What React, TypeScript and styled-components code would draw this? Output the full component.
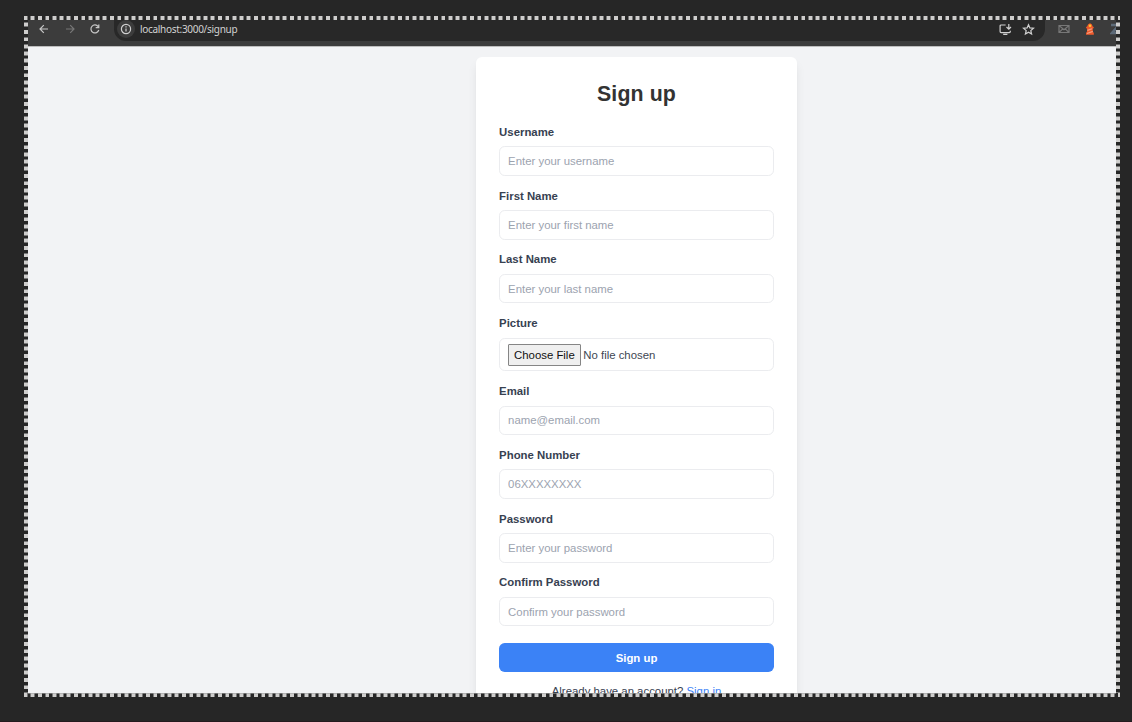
import React from 'react';
import styled, { createGlobalStyle } from 'styled-components';

const GlobalStyle = createGlobalStyle`
  * { box-sizing: border-box; }
  html, body { margin: 0; height: 100%; overflow: hidden; background: #262626; }
  body { font-family: "Liberation Sans", Arial, sans-serif; }
`;

const Desktop = styled.div`
  width: 1132px;
  height: 722px;
  padding: 16px 12px 25px 24px;
  background: #262626;
  border-bottom: 1px solid #241a1e;
`;

const dots = (direction: string) =>
  `repeating-linear-gradient(${direction}, #cecdcc 0 3.2px, #777 3.2px 3.8px, #262626 3.8px 6.4px, #777 6.4px 7.2px)`;

const Selection = styled.div`
  width: 1096px;
  height: 681px;
  padding: 4px;
  background-color: #262626;
  background-image: ${dots('to right')}, ${dots('to right')}, ${dots('to bottom')}, ${dots('to bottom')};
  background-size: 100% 4px, 100% 4px, 4px 100%, 4px 100%;
  background-position: 0 0, 0 100%, 0 0, 100% 0;
  background-repeat: no-repeat;
`;

const Browser = styled.div`
  display: flex;
  flex-direction: column;
  width: 1088px;
  height: 673px;
  overflow: hidden;
  background: #f2f3f5;
  box-shadow: 0 1px 0 #a0a0a099;
`;

const Toolbar = styled.header`
  display: flex;
  flex: none;
  height: 27px;
  background: #3c3c3c;
  border-bottom: 1px solid #bdbdbd;
  overflow: hidden;
`;

const Navigation = styled.nav`
  display: flex;
  flex: none;
  width: 86px;
  height: 18px;
  padding-left: 10px;
  align-items: center;
  gap: 13.6px;
`;

const Icon = styled.svg<{ $size?: number }>`
  display: block;
  flex: none;
  width: ${p => p.$size ?? 12}px;
  height: ${p => p.$size ?? 12}px;
  fill: none;
  stroke: currentColor;
  stroke-width: 1.2;
`;

const AddressBar = styled.div`
  display: flex;
  flex: none;
  align-items: center;
  width: 931px;
  height: 23px;
  margin-top: -2px;
  padding: 0 10px 1px 3px;
  border-radius: 0 0 12px 12px;
  background: #282828;
  color: #d0d0d0;
`;

const SiteInfo = styled.span`
  display: grid;
  place-items: center;
  width: 18px;
  height: 18px;
  border-radius: 50%;
  background: #3c3c3c;
`;

const Address = styled.span`
  margin-left: 5px;
  flex: 1;
  font: 10px/14px "Noto Sans", sans-serif;
  letter-spacing: -0.3px;
  color: #d2d2d2;
`;

const AddressActions = styled.div`
  display: flex;
  gap: 10px;
`;

const Extensions = styled.div`
  display: flex;
  align-items: center;
  height: 18px;
  margin-left: 13px;
  gap: 14px;
  color: #777;
`;

const Page = styled.main`
  display: flex;
  flex: 1;
  min-height: 0;
  justify-content: center;
  align-items: flex-start;
  padding: 10.4px 0 0 129px;
  overflow: hidden;
`;

const Card = styled.form`
  width: 320.4px;
  height: 670px;
  flex: none;
  padding: 23.2px 22.8px;
  border-radius: 6px;
  background: #fff;
  box-shadow: 0 7px 11px -2px #0000001a, 0 3px 4px -3px #0000001a;
`;

const Title = styled.h1`
  margin: 0 0 20.4px;
  color: #333;
  font-size: 21.34px;
  line-height: 26px;
  letter-spacing: 0.1px;
  text-align: center;
`;

const Field = styled.div`
  display: flex;
  flex-direction: column;
  margin-bottom: 14.7px;
`;

const FieldLabel = styled.label`
  height: 11.4px;
  margin-bottom: 8.1px;
  color: #374151;
  font-size: 11.38px;
  font-weight: 700;
  line-height: 11.4px;
`;

const TextInput = styled.input`
  width: 100%;
  height: 29.55px;
  padding: 0 8px;
  border: 1px solid #ebecef;
  border-radius: 5.7px;
  outline: none;
  background: #fff;
  color: #374151;
  font: 11.38px "Liberation Sans", Arial, sans-serif;
  &::placeholder { color: #9ca3af; opacity: 1; }
`;

const FilePicker = styled.div`
  display: flex;
  align-items: center;
  height: 33.8px;
  padding: 0 8px;
  gap: 2.6px;
  border: 1px solid #ebecef;
  border-radius: 5.7px;
  color: #404753;
  font-size: 11.38px;
`;

const FileButton = styled.button`
  width: 72.6px;
  height: 22px;
  padding: 0;
  border: 1px solid #858585;
  border-radius: 1px;
  background: #efefef;
  color: #111;
  font: 11.38px "Liberation Sans", Arial, sans-serif;
`;

const Submit = styled.button`
  display: block;
  width: 100%;
  height: 28.5px;
  margin-top: 17px;
  padding: 0;
  border: 0;
  border-radius: 5.7px;
  background: #3b82f6;
  color: #fff;
  font: bold 11.38px "Liberation Sans", Arial, sans-serif;
`;

const SignInPrompt = styled.p`
  margin: 11.6px 0 0;
  color: #374151;
  font-size: 11.38px;
  line-height: 17px;
  text-align: center;
`;

const SignInLink = styled.a`
  color: #3b82f6;
`;

const fields = [
  { id: 'username', label: 'Username', hint: 'Enter your username' },
  { id: 'first', label: 'First Name', hint: 'Enter your first name' },
  { id: 'last', label: 'Last Name', hint: 'Enter your last name' },
  { id: 'picture', label: 'Picture' },
  { id: 'email', label: 'Email', hint: 'name@email.com' },
  { id: 'phone', label: 'Phone Number', hint: '06XXXXXXXX' },
  { id: 'password', label: 'Password', hint: 'Enter your password', type: 'password' },
  { id: 'confirm', label: 'Confirm Password', hint: 'Confirm your password', type: 'password' },
];

export default function App() {
  return (
    <Desktop>
      <GlobalStyle />
      <Selection>
        <Browser>
          <Toolbar>
            <Navigation>
              <Icon viewBox="0 0 12 12" color="#c7c7c7"><path d="M10 6H2M5.8 2.2 2 6l3.8 3.8" /></Icon>
              <Icon viewBox="0 0 12 12" color="#777"><path d="M2 6h8M6.2 2.2 10 6 6.2 9.8" /></Icon>
              <Icon viewBox="0 0 12 12" color="#c7c7c7"><path d="M9.2 3.6A4 4 0 1 0 9.8 7M9.8 1.6v3H6.7" /></Icon>
            </Navigation>
            <AddressBar>
              <SiteInfo>
                <Icon $size={12} viewBox="0 0 12 12"><circle cx="6" cy="6" r="4.6" /><path d="M6 5.4v3M6 3.2v1.2" /></Icon>
              </SiteInfo>
              <Address>localhost:3000/signup</Address>
              <AddressActions>
                <Icon $size={13} viewBox="0 0 13 13"><path d="M6.6 2H2.1q-1 0-1 1v5.6q0 1 1 1h8.2q1 0 1-1V7.8M4.2 11.3h4.2M9.8 1v5M7.5 4l2.3 2.2L12 4" /></Icon>
                <Icon $size={13} viewBox="0 0 13 13"><path d="m6.5 1.7 1.4 3.2 3.6.3-2.7 2.4.8 3.5-3.1-1.9-3.1 1.9.8-3.5-2.7-2.4 3.6-.3z" /></Icon>
              </AddressActions>
            </AddressBar>
            <Extensions>
              <Icon viewBox="0 0 12 12"><path d="M1 2.5h10v7H1zL6 6.6l5-4.1M1 9.5l3.7-3.7M11 9.5 7.3 5.8" /></Icon>
              <Icon viewBox="0 0 12 12">
                <path d="M2 11.7V9.8l.9-.8.2-3.3-1-.8V4l1-.4Q3.7.6 6 .3 8.3.6 8.7 3.6l1 .4v.9l-1 .8.2 3.3.9.8v1.9z" fill="#ee5a2c" stroke="none" />
                <path d="m3.4 7.4 4.8-1.6M3 10.5l5.8-2.1" stroke="#f4a082" />
                <circle cx="6" cy="2.8" r="1.3" fill="#ffc52b" stroke="none" />
              </Icon>
              <Icon viewBox="0 0 12 12" color="#5d6a78"><path d="M1 2h8L2 10h8" strokeWidth="2.6" /></Icon>
            </Extensions>
          </Toolbar>
          <Page>
            <Card onSubmit={e => e.preventDefault()}>
              <Title>Sign up</Title>
              {fields.map(f => (
                <Field key={f.id}>
                  <FieldLabel htmlFor={f.id}>{f.label}</FieldLabel>
                  {f.hint ? (
                    <TextInput id={f.id} type={f.type ?? 'text'} placeholder={f.hint} />
                  ) : (
                    <FilePicker>
                      <FileButton id={f.id} type="button">Choose File</FileButton>
                      <span>No file chosen</span>
                    </FilePicker>
                  )}
                </Field>
              ))}
              <Submit>Sign up</Submit>
              <SignInPrompt>Already have an account? <SignInLink>Sign in</SignInLink></SignInPrompt>
            </Card>
          </Page>
        </Browser>
      </Selection>
    </Desktop>
  );
}
